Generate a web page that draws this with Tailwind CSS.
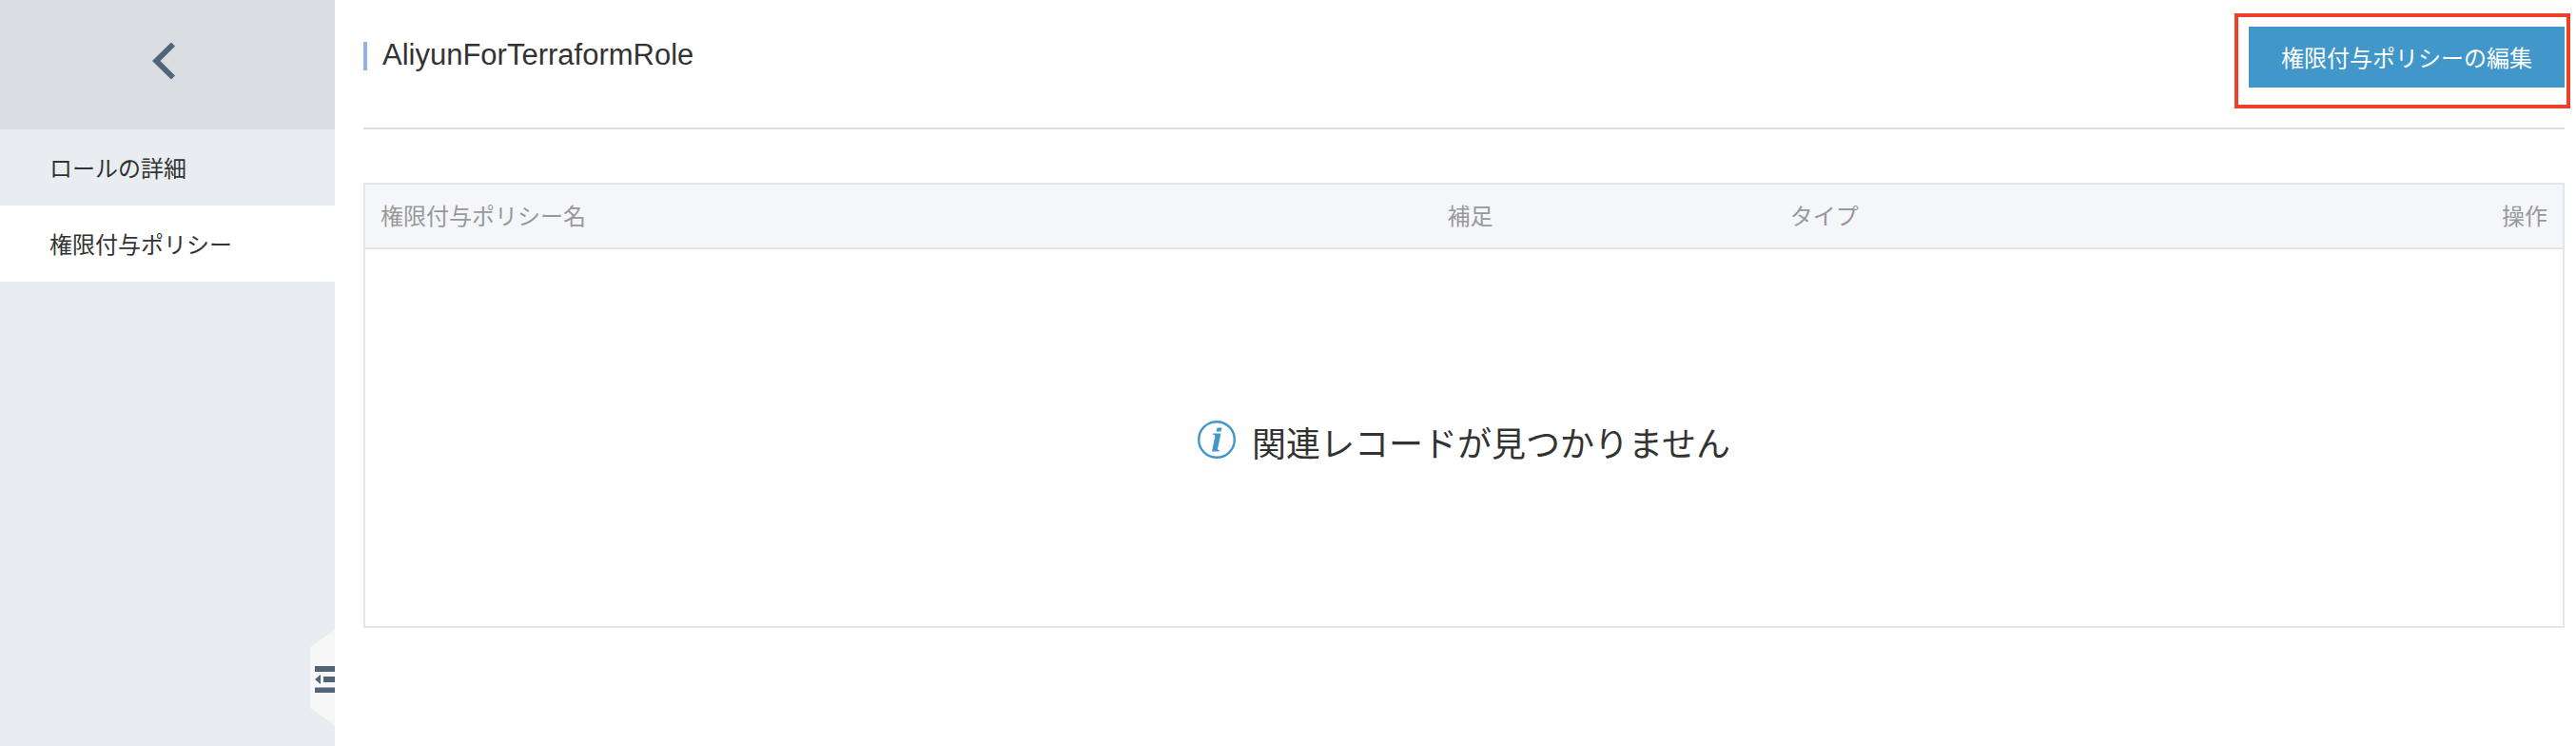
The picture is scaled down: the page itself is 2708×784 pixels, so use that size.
<!DOCTYPE html>
<html lang="ja">
<head>
<meta charset="utf-8">
<meta name="viewport" content="width=device-width, initial-scale=1">
<title>AliyunForTerraformRole</title>
<script src="https://cdn.jsdelivr.net/npm/@tailwindcss/browser@4"></script>
</head>
<body class="flex min-h-screen bg-white font-['Noto_Sans_CJK_JP',sans-serif] text-2xl text-[#333]">
  <aside class="relative w-88 shrink-0 bg-[#e9edf1]">
    <button type="button" aria-label="戻る" class="flex h-34 w-full items-center justify-center bg-[#d9dde2] pr-2 pb-2">
      <svg class="h-10 w-6" viewBox="0 0 24 40" fill="#546478"><path d="M20 0.5 24 4.5 8.5 20 24 35.5 20 39.5 0 20Z"/></svg>
    </button>
    <nav class="flex flex-col">
      <a href="#detail" class="flex h-20 items-center px-13">ロールの詳細</a>
      <a href="#policy" aria-current="page" class="flex h-20 items-center bg-white px-13">権限付与ポリシー</a>
    </nav>
    <button type="button" aria-label="メニューを折りたたむ" class="absolute right-0 bottom-[22px]">
      <svg class="block h-25 w-[26px]" viewBox="0 0 26 100">
        <path fill="#f7f7f7" d="M26 0V100L0 82V18Z"/>
        <path fill="#546478" d="M5 38H26V44H5ZM5 60.500H26V66H5ZM14 49H26V55H14ZM5 52 11 47V57Z"/>
      </svg>
    </button>
  </aside>

  <main class="min-w-0 grow pr-3 pl-[30px]">
    <header class="flex h-34 items-start justify-between border-b-2 border-[#ddd] pt-7">
      <div class="mt-4 flex items-start gap-4">
        <span class="h-[30px] w-1 bg-[#8fb5de]"></span>
        <h1 class="font-['Liberation_Sans',sans-serif] text-[31px] leading-7">AliyunForTerraformRole</h1>
      </div>
      <div class="relative">
        <button type="button" class="block h-16 bg-[#4197c9] px-[34px] text-white">権限付与ポリシーの編集</button>
        <div class="pointer-events-none absolute -top-3.5 -right-1.5 -bottom-[22px] -left-[15px] border-4 border-[#ee4027]"></div>
      </div>
    </header>

    <section class="mt-14 border-2 border-[#e1e6eb]">
      <table class="w-full table-fixed border-separate border-spacing-0">
        <thead>
          <tr class="h-17 bg-[#f4f6fa] text-[#999]">
            <th scope="col" class="w-[48.55%] border-b-2 border-[#e1e6eb] px-4 pb-0.5 text-left font-normal">権限付与ポリシー名</th>
            <th scope="col" class="w-[15.6%] border-b-2 border-[#e1e6eb] px-4 pb-0.5 text-left font-normal">補足</th>
            <th scope="col" class="border-b-2 border-[#e1e6eb] px-4 pb-0.5 text-left font-normal">タイプ</th>
            <th scope="col" class="border-b-2 border-[#e1e6eb] px-4 pb-0.5 text-right font-normal">操作</th>
          </tr>
        </thead>
        <tbody>
          <tr>
            <td colspan="4" class="h-[396px] pt-1">
              <div class="flex items-center justify-center gap-[17px]">
                <svg class="size-10" viewBox="0 0 40 40" fill="none"><circle cx="20" cy="20" r="18.800" stroke="#4197c9" stroke-width="2.400"/><path fill="#4197c9" d="M20.500 7.500H25.500L24.500 11.500H19.500ZM16 13.500H24.500L21 30Q20.800 31 23 31L22.500 32.500H15L18.300 16.500Q18.500 14.500 15.500 14.500Z"/></svg>
                <p class="pt-1 text-4xl leading-12">関連レコードが見つかりません</p>
              </div>
            </td>
          </tr>
        </tbody>
      </table>
    </section>
  </main>
</body>
</html>
